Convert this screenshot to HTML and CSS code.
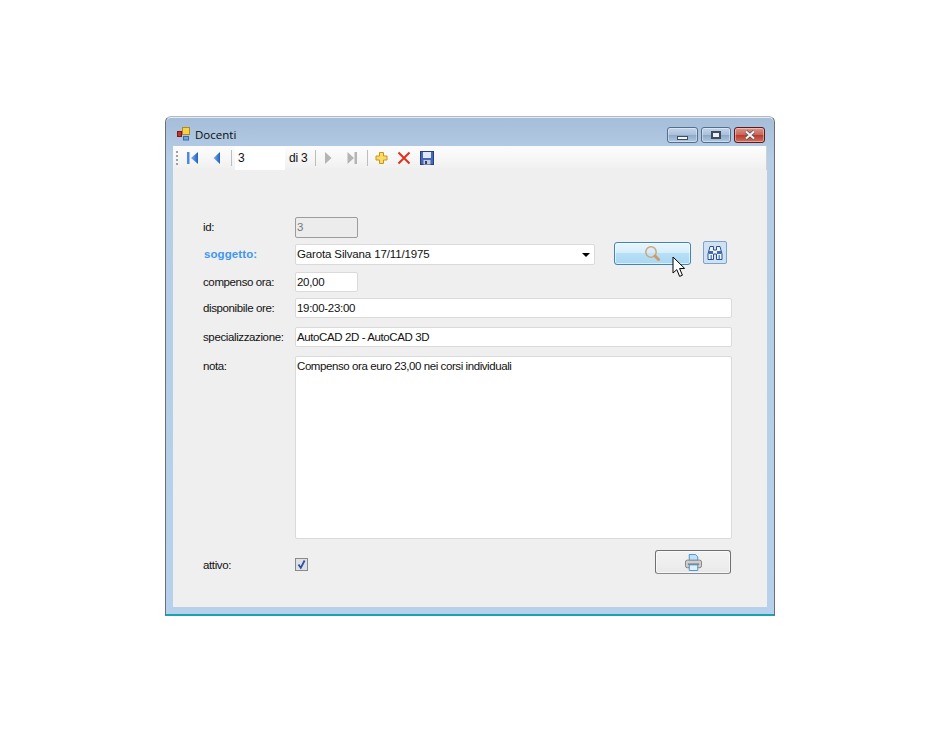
FILE: index.html
```html
<!DOCTYPE html>
<html lang="it">
<head>
<meta charset="utf-8">
<title>Docenti</title>
<link rel="stylesheet" href="styles.css">
</head>
<body>
<div class="window">
  <div class="titlebar">
    <svg class="app-icon" width="14" height="14" viewBox="0 0 14 14">
      <rect x="0.5" y="4.5" width="4" height="5" fill="#c8322a" stroke="#7a1a14"/>
      <rect x="5.5" y="0.5" width="7" height="7" fill="#f6d24a" stroke="#b08a20"/>
      <rect x="6.5" y="9.5" width="5" height="3.5" fill="#6aa6e8" stroke="#3a6aa8"/>
    </svg>
    <span class="title">Docenti</span>
    <div class="caption">
      <div class="cap cap-min"><span class="glyph-min"></span></div>
      <div class="cap cap-max"><span class="glyph-max"></span></div>
      <div class="cap cap-close">
        <svg width="14" height="10" viewBox="0 0 14 10"><path d="M3 1.5 L11 8.5 M11 1.5 L3 8.5" stroke="#4a4f58" stroke-width="3.6"/><path d="M3 1.5 L11 8.5 M11 1.5 L3 8.5" stroke="#f4f4f4" stroke-width="2.2"/></svg>
      </div>
    </div>
  </div>
  <div class="client">
    <div class="toolbar">
      <span class="grip"></span>
      <svg class="tb-icon first" width="13" height="14" viewBox="0 0 13 14"><defs><linearGradient id="nav" x1="0" x2="1" y1="0" y2="0"><stop offset="0" stop-color="#7fb2ec"/><stop offset="1" stop-color="#1f5fc4"/></linearGradient></defs><rect x="1" y="1" width="2.5" height="12" fill="#4f88dc"/><path d="M12 1 V13 L5 7 Z" fill="url(#nav)"/></svg>
      <svg class="tb-icon prev" width="8" height="14" viewBox="0 0 8 14"><path d="M7 1 V13 L0.5 7 Z" fill="url(#nav)"/></svg>
      <span class="tb-sep sep1"></span>
      <span class="tb-input">3</span>
      <span class="tb-text">di 3</span>
      <span class="tb-sep sep2"></span>
      <svg class="tb-icon next" width="8" height="14" viewBox="0 0 8 14"><path d="M1 1 V13 L7.5 7 Z" fill="#b4b4b4"/></svg>
      <svg class="tb-icon last" width="11" height="14" viewBox="0 0 11 14"><path d="M0.5 1 V13 L7 7 Z" fill="#b4b4b4"/><rect x="7.5" y="1" width="2.5" height="12" fill="#b4b4b4"/></svg>
      <span class="tb-sep sep3"></span>
      <svg class="tb-icon add" width="13" height="14" viewBox="0 0 13 14"><path d="M4.5 1.5 H8.5 V5 H12 V9 H8.5 V12.5 H4.5 V9 H1 V5 H4.5 Z" fill="#f9dc68" stroke="#c8961a"/></svg>
      <svg class="tb-icon del" width="14" height="14" viewBox="0 0 14 14"><path d="M1.5 1.5 L12.5 12.5 M12.5 1.5 L1.5 12.5" stroke="#e2301e" stroke-width="2"/></svg>
      <svg class="tb-icon save" width="14" height="14" viewBox="0 0 14 14"><rect x="0.5" y="0.5" width="13" height="13" fill="#4668b8" stroke="#2a3f80"/><rect x="3" y="1" width="8" height="6" fill="#dfe8f6"/><rect x="3.5" y="9" width="7" height="4.5" fill="#c8ccd4"/><rect x="5" y="10" width="2" height="3" fill="#2a3f80"/></svg>
    </div>

    <div class="form">
      <div class="row row-id">
        <label class="lbl">id:</label>
        <div class="field field-short disabled">3</div>
      </div>
      <div class="row row-sog">
        <label class="lbl lbl-bold">soggetto:</label>
        <div class="field field-combo">Garota Silvana 17/11/1975<span class="arrow"></span></div>
        <button class="btn-search">
          <svg width="18" height="18" viewBox="0 0 18 18"><circle cx="7" cy="7" r="5.2" fill="#d4e6f4" fill-opacity="0.4" stroke="#cda77a" stroke-width="1.5"/><path d="M11 11 L14.5 14.5" stroke="#cf9a68" stroke-width="3" stroke-linecap="round"/></svg>
        </button>
        <button class="btn-find">
          <svg width="16" height="16" viewBox="0 0 16 16"><path d="M3 1.5 H6.5 V5 H9.5 V1.5 H13 L15 9 V14.5 H9.5 V9 H6.5 V14.5 H1 V9 Z" fill="#f2f6fc" stroke="#2a4f90" stroke-width="1"/><rect x="2" y="6" width="4" height="3" fill="#3f6cb4"/><rect x="10" y="6" width="4" height="3" fill="#3f6cb4"/><rect x="3.5" y="10" width="1.5" height="4" fill="#5f8ccc"/><rect x="11.5" y="10" width="1.5" height="4" fill="#5f8ccc"/></svg>
        </button>
      </div>
      <div class="row row-comp">
        <label class="lbl">compenso ora:</label>
        <div class="field field-short">20,00</div>
      </div>
      <div class="row row-disp">
        <label class="lbl">disponibile ore:</label>
        <div class="field field-wide">19:00-23:00</div>
      </div>
      <div class="row row-spec">
        <label class="lbl">specializzazione:</label>
        <div class="field field-wide field-spec">AutoCAD 2D - AutoCAD 3D</div>
      </div>
      <div class="row row-nota">
        <label class="lbl">nota:</label>
        <div class="field field-wide field-area">Compenso ora euro 23,00 nei corsi individuali</div>
      </div>
      <div class="row row-att">
        <label class="lbl">attivo:</label>
        <span class="check">
          <svg width="11" height="11" viewBox="0 0 11 11"><path d="M2.5 5.5 L4.8 8.8 L8.6 1.5" fill="none" stroke="#2f4f9a" stroke-width="1.8"/></svg>
        </span>
        <button class="btn-print">
          <svg width="17" height="17" viewBox="0 0 18 18"><path d="M4.5 0.5 H11 L13.5 3 V7 H4.5 Z" fill="#bfe0f8" stroke="#4a8fd0"/><rect x="0.5" y="6.5" width="17" height="8" rx="2" fill="#cfcfcf" stroke="#808080"/><rect x="3" y="10" width="12" height="1.5" fill="#777"/><path d="M4.5 11.5 H13.5 V17.5 H4.5 Z" fill="#dff0fc" stroke="#4a8fd0"/></svg>
        </button>
      </div>
    </div>
  </div>
</div>
<svg class="cursor" width="14" height="22" viewBox="0 0 14 22"><path d="M1 1 V17 L4.8 13.6 L7.6 20.4 L10.4 19.2 L7.6 12.6 L12.6 12.4 Z" fill="#fff" stroke="#000" stroke-width="1"/></svg>
</body>
</html>
```
FILE: styles.css
```css
html, body { margin: 0; padding: 0; background: #fff; }
body {
  width: 940px;
  height: 732px;
  overflow: hidden;
  position: relative;
  font-family: "Liberation Sans", Arial, sans-serif;
  font-size: 11.5px;
  color: #111;
}
.window {
  box-sizing: border-box;
  width: 610px;
  height: 500px;
  margin: 116px 0 0 165px;
  padding: 0 7px 7px;
  border: 1px solid #6d6f72;
  border-top-color: #b4b8bc;
  border-bottom: 2px solid #17a3b0;
  border-radius: 6px 6px 0 0;
  background: linear-gradient(180deg, #a5bdd8 0, #b5cde6 8%, #b7d1ec 100%);
  box-shadow: inset 0 1px 0 #e4ecf4;
  display: flex;
  flex-direction: column;
}
.titlebar {
  box-sizing: border-box;
  height: 29px;
  flex: none;
  display: flex;
  align-items: center;
  padding: 5px 0 0 4px;
}
.app-icon { flex: none; }
.title { margin-left: 4px; font-family: "Open Sans", "Liberation Sans", sans-serif; font-size: 11.5px; color: #0b0b0b; }
.caption { margin-left: auto; display: flex; gap: 3px; align-self: flex-start; margin-top: 5px; margin-right: 2px; }
.cap {
  box-sizing: border-box;
  height: 16px;
  border: 1px solid #566e8c;
  border-radius: 3px;
  display: flex;
  align-items: center;
  justify-content: center;
  background: linear-gradient(180deg, #c3d6e9 0, #a8c0da 50%, #8ea9c8 52%, #b0c8e0 100%);
  box-shadow: inset 0 0 0 1px rgba(255,255,255,.4);
}
.cap-min { width: 31px; }
.cap-max { width: 30px; }
.cap-close {
  width: 31px;
  border-color: #5c1a1e;
  background: linear-gradient(180deg, #dc9488 0, #c9665a 48%, #b83c2e 52%, #d0705e 100%);
}
.glyph-min { width: 11px; height: 4px; margin-top: 5px; background: #f2f4f6; border: 1px solid #3e4c60; box-sizing: border-box; }
.glyph-max { width: 10px; height: 8px; border: 2px solid #3e4c60; box-sizing: border-box; background: #f0f0f0; }

.client {
  flex: 1;
  background: #efefef;
  display: flex;
  flex-direction: column;
  min-height: 0;
}
.toolbar {
  height: 24px;
  flex: none;
  display: flex;
  align-items: center;
  background: linear-gradient(180deg, #fcfcfc 0, #f7f7f7 50%, #efefef 100%);
  box-sizing: border-box;
  padding-left: 3px;
  border-right: 1px solid #d0d0d0;
}
.grip {
  width: 2px;
  height: 15px;
  flex: none;
  background: repeating-linear-gradient(180deg, #a0a0a0 0 2px, transparent 2px 4px);
}
.tb-icon { flex: none; }
.first { margin-left: 8px; }
.prev { margin-left: 14px; }
.tb-sep { width: 1px; height: 16px; background: #bdbdbd; flex: none; }
.sep1 { margin-left: 10px; }
.tb-input {
  box-sizing: border-box;
  width: 50px;
  height: 23px;
  margin: 1px 0 0 3px;
  padding: 4px 0 0 3px;
  font-size: 12px;
  background: #fff;
  flex: none;
  align-self: flex-start;
}
.tb-text { margin-left: 4px; flex: none; width: 22px; font-size: 12px; letter-spacing: -0.2px; }
.sep2 { margin-left: 4px; }
.next { margin-left: 8px; }
.last { margin-left: 15px; }
.sep3 { margin-left: 9px; }
.add { margin-left: 7px; }
.del { margin-left: 9px; }
.save { margin-left: 9px; }

.form {
  flex: 1;
  padding: 47px 0 0 30px;
  display: flex;
  flex-direction: column;
}
.row { display: flex; align-items: flex-start; position: relative; }
.lbl { width: 92px; flex: none; padding-top: 3px; line-height: 14px; letter-spacing: -0.38px; }
.lbl-bold { color: #3f97ef; font-weight: bold; font-size: 11.5px; letter-spacing: 0.1px; padding-left: 1px; box-sizing: border-box; }
.field {
  box-sizing: border-box;
  height: 20px;
  background: #fff;
  border: 1px solid #dadada;
  border-radius: 2px;
  padding: 2px 0 0 1px;
  line-height: 15px;
  flex: none;
  letter-spacing: -0.3px;
}
.field-short { width: 63px; }
.field-wide { width: 437px; }
.field-combo { width: 300px; height: 21px; position: relative; letter-spacing: -0.14px; }
.field-spec { letter-spacing: -0.4px; }
.disabled { height: 21px; background: #ececec; border-color: #9c9c9c; color: #777; }
.arrow {
  position: absolute;
  right: 4px;
  top: 8px;
  border-left: 4px solid transparent;
  border-right: 4px solid transparent;
  border-top: 4px solid #000;
}
.field-area { height: 183px; letter-spacing: -0.42px; }
.row-id { height: 27px; }
.row-sog { height: 28px; }
.row-comp { height: 26px; }
.row-disp { height: 29px; }
.row-spec { height: 29px; }
.row-nota { height: 194px; }
.row-att .lbl { padding-top: 8px; }
.btn-search {
  box-sizing: border-box;
  width: 77px;
  height: 23px;
  margin: -2px 0 0 19px;
  padding: 0;
  border: 1px solid #3c86bc;
  border-radius: 3px;
  background: linear-gradient(180deg, #e8f5fc 0, #d8eefa 45%, #b6e0f7 50%, #a9d6f2 100%);
  box-shadow: inset 0 0 0 1px rgba(255,255,255,.6);
  display: flex;
  align-items: center;
  justify-content: center;
}
.btn-find {
  box-sizing: border-box;
  width: 24px;
  height: 23px;
  margin: -3px 0 0 12px;
  padding: 0;
  border: 1px solid #7da2ce;
  border-radius: 2px;
  background: #cfe2f4;
  display: flex;
  align-items: center;
  justify-content: center;
}
.check {
  box-sizing: border-box;
  width: 13px;
  height: 13px;
  margin-top: 8px;
  flex: none;
  border: 1px solid #8a8a8a;
  background: #dde0e6;
  display: flex;
  align-items: center;
  justify-content: center;
}
.btn-print {
  box-sizing: border-box;
  width: 76px;
  height: 24px;
  margin: 0 0 0 347px;
  padding: 0;
  border: 1px solid #707070;
  border-bottom-color: #8a8a8a;
  border-radius: 3px;
  background: linear-gradient(180deg, #f2f2f2 0, #eeeeee 60%, #e8e8e8 100%);
  box-shadow: inset 0 0 0 1px rgba(255,255,255,.6);
  display: flex;
  align-items: center;
  justify-content: center;
}
.cursor { position: absolute; left: 672px; top: 256px; }
```
